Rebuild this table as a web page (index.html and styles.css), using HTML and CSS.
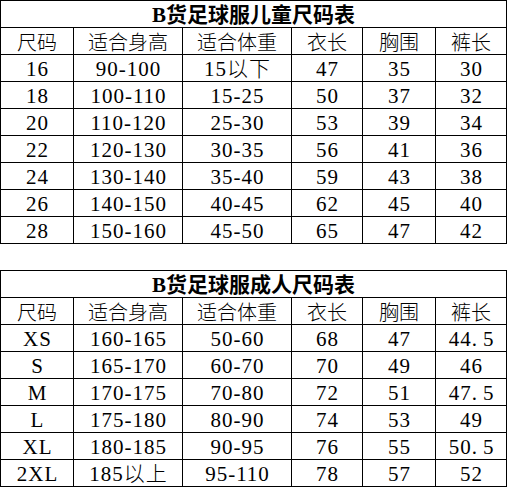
FILE: index.html
```html
<!DOCTYPE html>
<html lang="zh">
<head>
<meta charset="utf-8">
<title>B货足球服尺码表</title>
<link rel="stylesheet" href="styles.css">
</head>
<body>
<div class="sheet">
  <div class="size-table">
    <div class="cell title">B货足球服儿童尺码表</div>
    <div class="cell head">尺码</div><div class="cell head">适合身高</div><div class="cell head">适合体重</div><div class="cell head">衣长</div><div class="cell head">胸围</div><div class="cell head">裤长</div>
    <div class="cell">16</div><div class="cell">90-100</div><div class="cell">15以下</div><div class="cell">47</div><div class="cell">35</div><div class="cell">30</div>
    <div class="cell">18</div><div class="cell">100-110</div><div class="cell">15-25</div><div class="cell">50</div><div class="cell">37</div><div class="cell">32</div>
    <div class="cell">20</div><div class="cell">110-120</div><div class="cell">25-30</div><div class="cell">53</div><div class="cell">39</div><div class="cell">34</div>
    <div class="cell">22</div><div class="cell">120-130</div><div class="cell">30-35</div><div class="cell">56</div><div class="cell">41</div><div class="cell">36</div>
    <div class="cell">24</div><div class="cell">130-140</div><div class="cell">35-40</div><div class="cell">59</div><div class="cell">43</div><div class="cell">38</div>
    <div class="cell">26</div><div class="cell">140-150</div><div class="cell">40-45</div><div class="cell">62</div><div class="cell">45</div><div class="cell">40</div>
    <div class="cell">28</div><div class="cell">150-160</div><div class="cell">45-50</div><div class="cell">65</div><div class="cell">47</div><div class="cell">42</div>
  </div>
  <div class="size-table">
    <div class="cell title">B货足球服成人尺码表</div>
    <div class="cell head">尺码</div><div class="cell head">适合身高</div><div class="cell head">适合体重</div><div class="cell head">衣长</div><div class="cell head">胸围</div><div class="cell head">裤长</div>
    <div class="cell">XS</div><div class="cell">160-165</div><div class="cell">50-60</div><div class="cell">68</div><div class="cell">47</div><div class="cell">44<span class="dot">.</span>5</div>
    <div class="cell">S</div><div class="cell">165-170</div><div class="cell">60-70</div><div class="cell">70</div><div class="cell">49</div><div class="cell">46</div>
    <div class="cell">M</div><div class="cell">170-175</div><div class="cell">70-80</div><div class="cell">72</div><div class="cell">51</div><div class="cell">47<span class="dot">.</span>5</div>
    <div class="cell">L</div><div class="cell">175-180</div><div class="cell">80-90</div><div class="cell">74</div><div class="cell">53</div><div class="cell">49</div>
    <div class="cell">XL</div><div class="cell">180-185</div><div class="cell">90-95</div><div class="cell">76</div><div class="cell">55</div><div class="cell">50<span class="dot">.</span>5</div>
    <div class="cell">2XL</div><div class="cell">185以上</div><div class="cell">95-110</div><div class="cell">78</div><div class="cell">57</div><div class="cell">52</div>
  </div>
</div>
</body>
</html>
```

FILE: styles.css
```css
html, body {
  margin: 0;
  padding: 0;
  background: #fff;
}

.sheet {
  display: flex;
  flex-direction: column;
  gap: 26px;
  width: 507px;
}

.size-table {
  display: grid;
  grid-template-columns: 72px 108px 108px 70px 72px 70px;
  grid-auto-rows: 26px;
  gap: 1px;
  padding: 1px;
  background: #000;
}

.cell {
  background: #fff;
  display: flex;
  align-items: center;
  justify-content: center;
  padding: 3px 0 0 1px;
  box-sizing: border-box;
  font-family: "Liberation Serif", "Noto Sans CJK SC", serif;
  font-size: 21px;
  font-weight: 300;
  letter-spacing: 1px;
  line-height: 1;
  color: #000;
  white-space: nowrap;
}

.head {
  font-size: 20px;
  letter-spacing: 0;
  padding-left: 0;
}

.dot {
  margin-right: 5px;
}

.title {
  grid-column: 1 / -1;
  font-size: 21px;
  font-weight: 700;
  letter-spacing: 0;
  padding-left: 0;
}
```
